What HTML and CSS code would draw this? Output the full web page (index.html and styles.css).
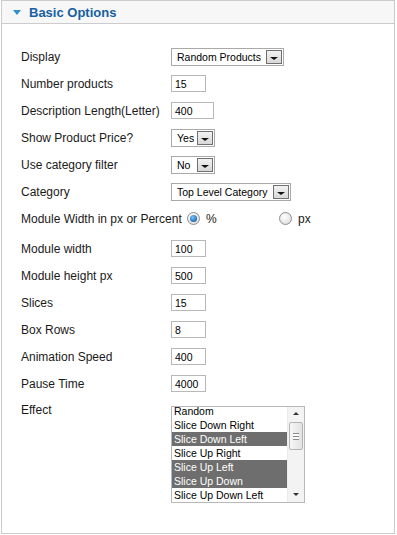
FILE: index.html
```html
<!DOCTYPE html>
<html>

<head>
  <meta charset="utf-8" />
  <title>Basic Options</title>
  <link rel="stylesheet" href="styles.css">
</head>

<body>
  <div class="panel">
    <h3 class="panel-title"><span class="caret"></span>Basic Options</h3>
    <div class="options">
      <div class="row">
        <label>Display</label>
        <span class="select w-display"><span class="select-text">Random Products</span><span class="select-btn"></span></span>
      </div>
      <div class="row">
        <label>Number products</label>
        <input class="text w-short" type="text" value="15">
      </div>
      <div class="row">
        <label>Description Length(Letter)</label>
        <input class="text w-long" type="text" value="400">
      </div>
      <div class="row">
        <label>Show Product Price?</label>
        <span class="select w-small"><span class="select-text">Yes</span><span class="select-btn"></span></span>
      </div>
      <div class="row">
        <label>Use category filter</label>
        <span class="select w-small"><span class="select-text">No</span><span class="select-btn"></span></span>
      </div>
      <div class="row">
        <label>Category</label>
        <span class="select w-cat"><span class="select-text">Top Level Category</span><span class="select-btn"></span></span>
      </div>
      <div class="row row-radio">
        <label>Module Width in px or Percent</label>
        <div class="radios">
          <span class="radio checked"></span><span class="radio-label first">%</span>
          <span class="radio"></span><span class="radio-label">px</span>
        </div>
      </div>
      <div class="row">
        <label>Module width</label>
        <input class="text w-short" type="text" value="100">
      </div>
      <div class="row">
        <label>Module height px</label>
        <input class="text w-short" type="text" value="500">
      </div>
      <div class="row">
        <label>Slices</label>
        <input class="text w-short" type="text" value="15">
      </div>
      <div class="row">
        <label>Box Rows</label>
        <input class="text w-short" type="text" value="8">
      </div>
      <div class="row">
        <label>Animation Speed</label>
        <input class="text w-short" type="text" value="400">
      </div>
      <div class="row">
        <label>Pause Time</label>
        <input class="text w-short" type="text" value="4000">
      </div>
      <div class="row row-effect">
        <label>Effect</label>
        <div class="listbox">
          <ul class="items">
            <li>Random</li>
            <li>Slice Down Right</li>
            <li class="selected">Slice Down Left</li>
            <li>Slice Up Right</li>
            <li class="selected">Slice Up Left</li>
            <li class="selected">Slice Up Down</li>
            <li>Slice Up Down Left</li>
          </ul>
          <div class="scrollbar">
            <span class="arrow up"></span>
            <span class="thumb"><span class="grip"></span></span>
            <span class="arrow down"></span>
          </div>
        </div>
      </div>
    </div>
  </div>
</body>

</html>
```

FILE: styles.css
```css
html,
body {
  margin: 0;
  background: #ffffff;
  font-family: "Liberation Sans", Arial, sans-serif;
  color: #1a1a1a;
}

.panel {
  box-sizing: border-box;
  width: 394px;
  height: 534px;
  margin-left: 1px;
  border: 1px solid #cccccc;
}

.panel-title {
  display: flex;
  align-items: center;
  height: 22px;
  margin: 0;
  padding-left: 11px;
  background: #f7f7f7;
  border-bottom: 1px solid #cccccc;
  font-size: 13px;
  font-weight: bold;
  color: #165fa3;
}

.caret {
  width: 0;
  height: 0;
  margin: 1px 8px 0 0;
  border-left: 4px solid transparent;
  border-right: 4px solid transparent;
  border-top: 5px solid #2e90d0;
}

.options {
  padding: 19px 0 0 19px;
}

.row {
  display: grid;
  grid-template-columns: 150px auto;
  align-items: center;
  height: 27px;
  font-size: 12px;
}

.row label {
  white-space: nowrap;
}

.row-radio {
  margin-bottom: 3px;
}

.row-effect {
  align-items: start;
  height: auto;
  padding-top: 9px;
}

.row-effect label {
  margin-top: -3px;
  line-height: 14px;
}

/* text fields */
.text {
  box-sizing: border-box;
  height: 17px;
  margin: 0;
  padding: 1px 0 0 3px;
  border: 1px solid #b8b8b8;
  font-family: "Liberation Sans", Arial, sans-serif;
  font-size: 10.5px;
  color: #000000;
  outline: none;
}

.w-short {
  width: 35px;
}

.w-long {
  width: 43px;
}

/* drop downs */
.select {
  box-sizing: border-box;
  display: flex;
  align-items: center;
  justify-content: space-between;
  height: 18px;
  padding: 1px;
  border: 1px solid #a9a9a9;
  font-size: 10.5px;
  color: #000000;
}

.select-text {
  padding-left: 4px;
  white-space: nowrap;
}

.select-btn {
  box-sizing: border-box;
  position: relative;
  width: 16px;
  height: 14px;
  border: 1px solid #707070;
  background: linear-gradient(#f2f2f2, #d8d8d8);
}

.select-btn::after {
  content: "";
  position: absolute;
  left: 3px;
  top: 6px;
  border-left: 4px solid transparent;
  border-right: 4px solid transparent;
  border-top: 3px solid #111111;
}

.w-display {
  width: 113px;
}

.w-small {
  width: 44px;
}

.w-cat {
  width: 120px;
}

/* radio buttons */
.radios {
  display: flex;
  align-items: center;
}

.radio {
  box-sizing: border-box;
  position: relative;
  width: 13px;
  height: 13px;
  margin-left: 16px;
  border: 1px solid #8e8e8e;
  border-radius: 50%;
  background: radial-gradient(circle at 40% 35%, #ffffff, #d6d6d6);
}

.radio.checked::after {
  content: "";
  position: absolute;
  left: 2px;
  top: 2px;
  width: 7px;
  height: 7px;
  border-radius: 50%;
  background: radial-gradient(circle at 40% 35%, #7fc6f5, #1a66ad 75%);
}

.radio-label {
  margin-left: 6px;
}

.radio-label.first {
  width: 57px;
}

/* effect list */
.listbox {
  box-sizing: border-box;
  display: flex;
  width: 134px;
  height: 97px;
  border: 1px solid #b8b8b8;
  overflow: hidden;
}

.items {
  flex: 1;
  margin: -3px 0 0;
  padding: 0;
  list-style: none;
  font-size: 10.5px;
  color: #000000;
}

.items li {
  height: 14px;
  line-height: 14px;
  padding-left: 2px;
  white-space: nowrap;
}

.items li.selected {
  background: #6e6e6e;
  color: #ffffff;
}

.scrollbar {
  display: flex;
  flex-direction: column;
  align-items: center;
  width: 16px;
  background: #f3f3f3;
  border-left: 1px solid #ebebeb;
}

.arrow {
  width: 0;
  height: 0;
  border-left: 3px solid transparent;
  border-right: 3px solid transparent;
}

.arrow.up {
  margin-top: 5px;
  border-bottom: 3px solid #333333;
}

.arrow.down {
  margin-top: auto;
  margin-bottom: 6px;
  border-top: 3px solid #333333;
}

.thumb {
  box-sizing: border-box;
  display: flex;
  align-items: center;
  justify-content: center;
  width: 14px;
  height: 28px;
  margin-top: 7px;
  border: 1px solid #b4b4b4;
  border-radius: 2px;
  background: linear-gradient(90deg, #f7f7f7, #e2e2e2);
}

.grip {
  width: 6px;
  height: 5px;
  border-top: 1px solid #8a8a8a;
  border-bottom: 1px solid #8a8a8a;
  background: linear-gradient(#ffffff 2px, #8a8a8a 2px, #8a8a8a 3px, #ffffff 3px);
}
```
